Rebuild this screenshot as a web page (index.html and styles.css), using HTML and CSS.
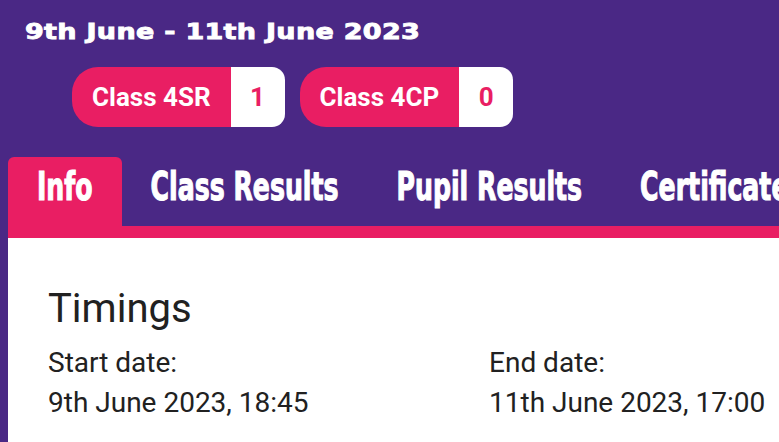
FILE: index.html
```html
<!DOCTYPE html>
<html>
<head>
<meta charset="utf-8">
<link rel="stylesheet" href="styles.css">
</head>
<body>
<header class="header">
  <h1 class="title">9th June - 11th June 2023</h1>
  <div class="badges">
    <div class="badge"><span class="badge-label">Class 4SR</span><span class="badge-count">1</span></div>
    <div class="badge"><span class="badge-label">Class 4CP</span><span class="badge-count">0</span></div>
  </div>
</header>
<main class="main">
  <nav class="tabs">
    <div class="tab active"><span class="tab-text">Info</span></div>
    <div class="tab"><span class="tab-text">Class Results</span></div>
    <div class="tab"><span class="tab-text">Pupil Results</span></div>
    <div class="tab"><span class="tab-text">Certificates</span></div>
  </nav>
  <div class="tab-bar"></div>
  <section class="panel">
    <h2 class="panel-title">Timings</h2>
    <div class="timings">
      <div class="timing">
        <div class="timing-label">Start date:</div>
        <div class="timing-value">9th June 2023, 18:45</div>
      </div>
      <div class="timing">
        <div class="timing-label">End date:</div>
        <div class="timing-value">11th June 2023, 17:00</div>
      </div>
    </div>
  </section>
</main>
</body>
</html>
```
FILE: styles.css
```css
html, body {
  margin: 0;
  padding: 0;
}
body {
  background: #4a2885;
  width: 779px;
  height: 442px;
  overflow: hidden;
  font-family: Roboto, "Liberation Sans", sans-serif;
}
.header {
  padding: 14px 0 0 25px;
}
.title {
  margin: 0;
  font-family: "DejaVu Sans", sans-serif;
  font-weight: bold;
  font-size: 27px;
  letter-spacing: 0.3px;
  line-height: 32px;
  height: 32px;
  color: #fff;
  -webkit-text-stroke: 1.1px #fff;
  white-space: nowrap;
  transform: scaleY(0.8);
  transform-origin: 0 25.4px;
}
.badges {
  display: flex;
  gap: 15px;
  margin: 21px 0 0 47px;
}
.badge {
  display: flex;
  height: 60px;
  border-radius: 26px 13px 13px 26px;
  overflow: hidden;
  font-weight: bold;
  font-size: 26px;
  line-height: 60px;
}
.badge-label {
  background: #e91e63;
  color: #fff;
  padding: 0 20px 0 20px;
}
.badge-count {
  background: #fff;
  color: #e91e63;
  width: 54px;
  text-align: center;
}
.main {
  margin: 30px 0 0 8px;
  overflow: hidden;
}
.tabs {
  display: flex;
  height: 69px;
  white-space: nowrap;
  overflow: hidden;
}
.tab {
  flex: none;
  padding: 0 29px;
  border-radius: 6px 6px 0 0;
  color: #fff;
  font-family: "DejaVu Sans Condensed", "DejaVu Sans", sans-serif;
  font-stretch: condensed;
  font-weight: bold;
  font-size: 28px;
  line-height: 69px;
}
.tab.active {
  background: #e91e63;
}
.tab-text {
  display: inline-block;
  transform: scaleY(1.42);
  transform-origin: 0 47px;
  -webkit-text-stroke: 0.8px #fff;
}
.tab-bar {
  height: 12px;
  background: #e91e63;
}
.panel {
  background: #fff;
  padding: 47px 0 40px 40px;
  color: #212121;
}
.panel-title {
  margin: 0;
  font-weight: normal;
  font-size: 40px;
  line-height: 48px;
}
.timings {
  display: grid;
  grid-template-columns: 441px 1fr;
  margin-top: 10px;
  font-size: 28px;
  line-height: 40px;
}
```
